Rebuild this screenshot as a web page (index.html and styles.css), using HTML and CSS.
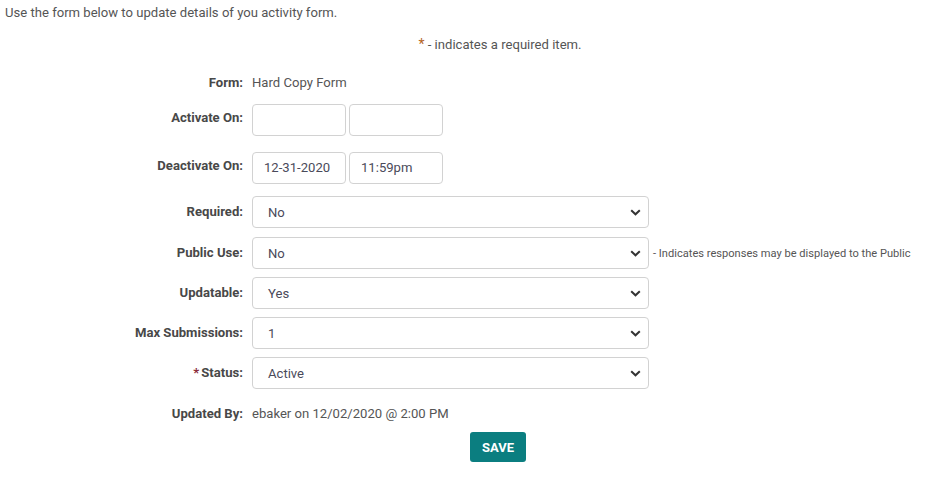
FILE: index.html
```html
<!DOCTYPE html>
<html>
<head>
<meta charset="utf-8">
<link rel="stylesheet" href="styles.css">
</head>
<body>
<p class="intro">Use the form below to update details of you activity form.</p>
<div class="centered note"><span class="req">*</span> - indicates a required item.</div>
<div class="form">
  <div class="row row-text">
    <div class="label">Form:</div>
    <div class="value">Hard Copy Form</div>
  </div>
  <div class="row row-date r-activate">
    <div class="label top">Activate On:</div>
    <div class="pair"><div class="input"></div><div class="input"></div></div>
  </div>
  <div class="row row-date r-deactivate">
    <div class="label top">Deactivate On:</div>
    <div class="pair"><div class="input">12-31-2020</div><div class="input">11:59pm</div></div>
  </div>
  <div class="row r-required">
    <div class="label">Required:</div>
    <div class="select"><span>No</span><svg class="chev" width="11" height="7" viewBox="0 0 11 7"><path d="M1.2 1.2 L5.5 5.3 L9.8 1.2" fill="none" stroke="#333" stroke-width="2"/></svg></div>
  </div>
  <div class="row r-sel1">
    <div class="label">Public Use:</div>
    <div class="field-with-hint">
      <div class="select"><span>No</span><svg class="chev" width="11" height="7" viewBox="0 0 11 7"><path d="M1.2 1.2 L5.5 5.3 L9.8 1.2" fill="none" stroke="#333" stroke-width="2"/></svg></div>
      <span class="hint">- Indicates responses may be displayed to the Public</span>
    </div>
  </div>
  <div class="row r-sel">
    <div class="label">Updatable:</div>
    <div class="select"><span>Yes</span><svg class="chev" width="11" height="7" viewBox="0 0 11 7"><path d="M1.2 1.2 L5.5 5.3 L9.8 1.2" fill="none" stroke="#333" stroke-width="2"/></svg></div>
  </div>
  <div class="row r-sel">
    <div class="label">Max Submissions:</div>
    <div class="select"><span>1</span><svg class="chev" width="11" height="7" viewBox="0 0 11 7"><path d="M1.2 1.2 L5.5 5.3 L9.8 1.2" fill="none" stroke="#333" stroke-width="2"/></svg></div>
  </div>
  <div class="row r-sel">
    <div class="label"><span class="req2">*</span>Status:</div>
    <div class="select"><span>Active</span><svg class="chev" width="11" height="7" viewBox="0 0 11 7"><path d="M1.2 1.2 L5.5 5.3 L9.8 1.2" fill="none" stroke="#333" stroke-width="2"/></svg></div>
  </div>
  <div class="row row-text r-updated">
    <div class="label">Updated By:</div>
    <div class="value">ebaker on 12/02/2020 @ 2:00 PM</div>
  </div>
</div>
<div class="centered save-row"><button class="save">SAVE</button></div>
</body>
</html>
```
FILE: styles.css
```css
html, body {
  margin: 0;
  padding: 0;
  background: #fff;
}
body {
  font-family: Roboto, "Liberation Sans", sans-serif;
  font-size: 13.1px;
  color: #555;
  width: 925px;
}
.intro {
  margin: 0;
  padding: 4px 5px 0;
  line-height: 18px;
}
.centered {
  margin-left: 75px;
  text-align: center;
}
.note {
  margin-top: 14px;
  height: 18px;
  line-height: 18px;
}
.req {
  color: #b4651f;
  font-size: 14px;
  line-height: 1;
}
.req2 {
  color: #8a2c3a;
  margin-right: 2px;
}
.form {
  margin-top: 19px;
}
.row {
  display: grid;
  grid-template-columns: 243px 1fr;
  column-gap: 9px;
  align-items: center;
}
.row-text {
  line-height: 20px;
}
.label {
  text-align: right;
  font-weight: 700;
  color: #484848;
  line-height: 18px;
}
.label.top {
  align-self: start;
  padding-top: 5px;
}
.value {
  color: #555;
}
.r-activate { margin-top: 11px; }
.r-deactivate { margin-top: 16px; }
.r-required { margin-top: 12px; }
.r-sel1 { margin-top: 9px; }
.r-sel { margin-top: 8px; }
.r-updated { margin-top: 15px; }
.pair {
  display: flex;
  gap: 3px;
}
.input {
  box-sizing: border-box;
  width: 94px;
  height: 32px;
  border: 1px solid #d2d2d2;
  border-radius: 4px;
  padding: 0 11px;
  line-height: 30px;
  color: #4a4a5a;
}
.field-with-hint {
  display: flex;
  align-items: center;
  gap: 4px;
}
.select {
  box-sizing: border-box;
  width: 397px;
  height: 32px;
  border: 1px solid #d2d2d2;
  border-radius: 4px;
  padding: 0 7px 0 15px;
  display: flex;
  align-items: center;
  justify-content: space-between;
  color: #4a4a5a;
}
.chev {
  display: block;
}
.hint {
  font-size: 11.1px;
  color: #555;
  white-space: nowrap;
}
.save-row {
  margin-top: 8px;
  padding-right: 4px;
}
.save {
  font-family: Roboto, "Liberation Sans", sans-serif;
  font-size: 13px;
  font-weight: 700;
  color: #fff;
  background: #0b7e80;
  border: none;
  border-radius: 3px;
  height: 30px;
  width: 56px;
  padding: 0;
  cursor: pointer;
}
```
